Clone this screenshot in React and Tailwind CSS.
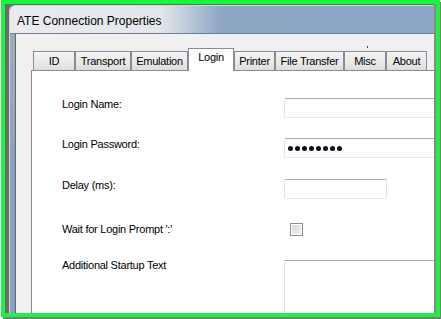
const tabs = [
  { label: "ID", w: "w-[42px]" },
  { label: "Transport", w: "w-[56px]" },
  { label: "Emulation", w: "w-[57px]" },
  { label: "Login", w: "w-[46px]", active: true },
  { label: "Printer", w: "w-[41px]" },
  { label: "File Transfer", w: "w-[69px]" },
  { label: "Misc", w: "w-[42px]" },
  { label: "About", w: "w-[41px]" },
];

function Tab({ label, w, active }) {
  if (active) {
    return (
      <div
        className={`${w} h-[23px] -mb-px relative z-10 shrink-0 bg-white border border-b-0 border-[#898c95] flex justify-center pt-[2px] leading-[13px]`}
      >
        {label}
      </div>
    );
  }
  return (
    <div
      className={`${w} h-[19px] shrink-0 border border-b-0 border-[#898c95] bg-[linear-gradient(#f4f4f4,#ebebeb_50%,#dddddd)] flex items-center justify-center leading-[13px]`}
    >
      {label}
    </div>
  );
}

const inputCls =
  "h-[20px] shrink-0 bg-white border border-t-[#abadb3] border-l-[#e2e3ea] border-r-[#e2e3ea] border-b-[#e3e9ef] rounded-[2px]";

function Row({ label, className, children }) {
  return (
    <div className={`flex items-start ${className || ""}`}>
      <span className="w-[222px] shrink-0 leading-[13px]">{label}</span>
      {children}
    </div>
  );
}

export default function App() {
  return (
    <div className="w-[441px] h-[319px] bg-white font-['Liberation_Sans',Arial,sans-serif] text-[11px] tracking-[-0.25px] text-black relative">
      <div className="ml-px w-[439px] h-[317px] border-4 border-[#19f53f] shadow-[2px_2px_0_#7d7d7d]">
        <div className="h-full flex flex-col bg-[#6b6b6b] pt-px pl-[4px] border-r-2 border-[#8a8a8a] overflow-hidden">
          <div className="flex-1 flex flex-col rounded-tl-[6px] border-t border-l border-[#cfd5dc] overflow-hidden">
            {/* title bar */}
            <div className="h-[28px] shrink-0 border-b border-[#6c7f94] flex items-center pl-[7px] pt-[2px] bg-[linear-gradient(90deg,#e9ebee_0px,#e3e6ea_150px,#8ca7c4_212px,#8aa6c4_100%)]">
              <span className="text-[12px] tracking-normal text-black">ATE Connection Properties</span>
            </div>

            <div className="flex-1 flex min-h-0">
              {/* left glass frame */}
              <div className="w-[5px] shrink-0 bg-[linear-gradient(#a4abb4,#8aa1bd_130px)]" />

              {/* dialog body */}
              <div className="flex-1 min-w-0 flex flex-col border-l border-[#5d6875] bg-[#f0f0f0] pl-[15px] pt-[14px]">
                <div className="h-[22px] shrink-0 flex items-end pl-[2px]">
                  {tabs.map((t) => (
                    <Tab key={t.label} {...t} />
                  ))}
                </div>

                <div className="flex-1 bg-white border-t border-l border-[#898c95] pt-[27px] pl-[30px] overflow-hidden">
                  <Row label="Login Name:">
                    <div className={`${inputCls} w-[200px]`} />
                  </Row>
                  <Row label="Login Password:" className="mt-[20px]">
                    <div className={`${inputCls} w-[200px] flex items-center gap-[2px] pl-[3px]`}>
                      {Array.from({ length: 8 }).map((_, i) => (
                        <span key={i} className="w-[5px] h-[5px] rounded-full bg-[#0a0a1a]" />
                      ))}
                    </div>
                  </Row>
                  <Row label="Delay (ms):" className="mt-[21px]">
                    <div className={`${inputCls} w-[103px]`} />
                  </Row>
                  <Row label="Wait for Login Prompt ':'" className="mt-[24px]">
                    <div className="ml-[6px] w-[13px] h-[13px] shrink-0 border border-[#8e8f8f] p-px bg-white">
                      <div className="w-full h-full bg-[linear-gradient(135deg,#d6d6d6,#f4f4f4)]" />
                    </div>
                  </Row>
                  <Row label="Additional Startup Text" className="mt-[23px]">
                    <div className={`${inputCls} w-[200px] h-[70px] mt-px rounded-none`} />
                  </Row>
                </div>
              </div>
            </div>
          </div>
        </div>
      </div>
      {/* stray pixel above the Misc tab */}
      <div className="absolute left-[367px] top-[46px] w-px h-[2px] bg-[#444]" />
    </div>
  );
}
